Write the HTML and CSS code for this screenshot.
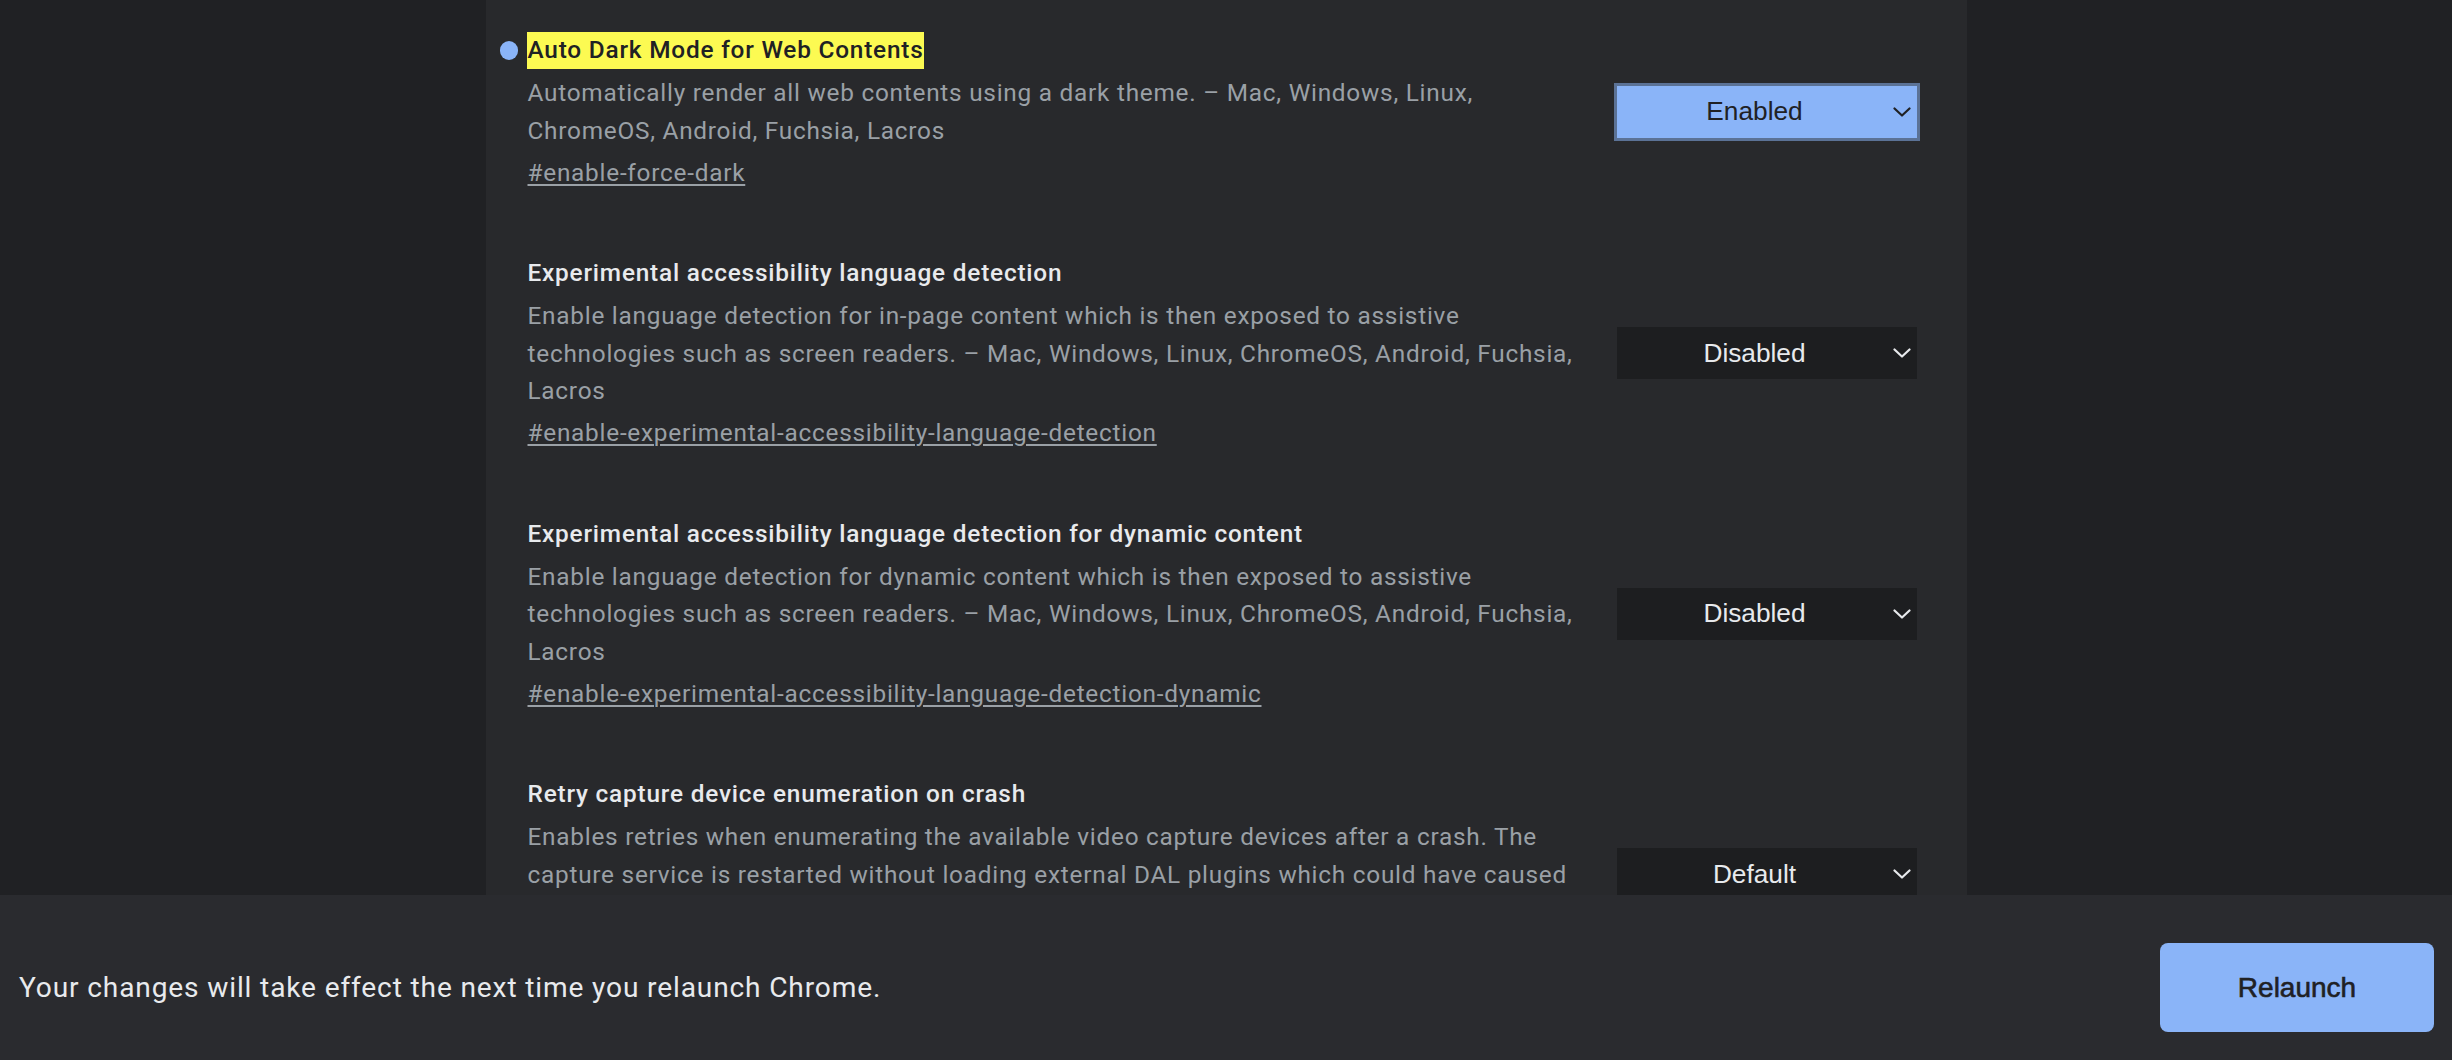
FILE: index.html
```html
<!DOCTYPE html>
<html lang="en">
<head>
<meta charset="utf-8">
<title>Experiments</title>
<link rel="stylesheet" href="styles.css">
</head>
<body>
<div class="page">
  <main class="scroller">
    <section class="column">
      <div class="exp">
        <span class="dot"></span>
        <div class="exp-text">
          <h3 class="exp-name"><span class="hl">Auto Dark Mode for Web Contents</span></h3>
          <p class="exp-desc">Automatically render all web contents using a dark theme. – Mac, Windows, Linux, ChromeOS, Android, Fuchsia, Lacros</p>
          <a class="exp-link" href="#enable-force-dark">#enable-force-dark</a>
        </div>
        <div class="exp-actions">
          <div class="select select-on"><span class="select-label">Enabled</span><svg class="chev" viewBox="0 0 18 10" width="18" height="10"><polyline points="1.5,1.5 9,8.5 16.5,1.5"/></svg></div>
        </div>
      </div>

      <div class="exp">
        <div class="exp-text">
          <h3 class="exp-name">Experimental accessibility language detection</h3>
          <p class="exp-desc">Enable language detection for in-page content which is then exposed to assistive technologies such as screen readers. – Mac, Windows, Linux, ChromeOS, Android, Fuchsia, Lacros</p>
          <a class="exp-link" href="#enable-experimental-accessibility-language-detection">#enable-experimental-accessibility-language-detection</a>
        </div>
        <div class="exp-actions">
          <div class="select"><span class="select-label">Disabled</span><svg class="chev" viewBox="0 0 18 10" width="18" height="10"><polyline points="1.5,1.5 9,8.5 16.5,1.5"/></svg></div>
        </div>
      </div>

      <div class="exp">
        <div class="exp-text">
          <h3 class="exp-name">Experimental accessibility language detection for dynamic content</h3>
          <p class="exp-desc">Enable language detection for dynamic content which is then exposed to assistive technologies such as screen readers. – Mac, Windows, Linux, ChromeOS, Android, Fuchsia, Lacros</p>
          <a class="exp-link" href="#enable-experimental-accessibility-language-detection-dynamic">#enable-experimental-accessibility-language-detection-dynamic</a>
        </div>
        <div class="exp-actions">
          <div class="select"><span class="select-label">Disabled</span><svg class="chev" viewBox="0 0 18 10" width="18" height="10"><polyline points="1.5,1.5 9,8.5 16.5,1.5"/></svg></div>
        </div>
      </div>

      <div class="exp">
        <div class="exp-text">
          <h3 class="exp-name">Retry capture device enumeration on crash</h3>
          <p class="exp-desc">Enables retries when enumerating the available video capture devices after a crash. The capture service is restarted without loading external DAL plugins which could have caused the crash. – Mac</p>
          <a class="exp-link" href="#retry-capture-device-enumeration-on-crash">#retry-capture-device-enumeration-on-crash</a>
        </div>
        <div class="exp-actions">
          <div class="select"><span class="select-label">Default</span><svg class="chev" viewBox="0 0 18 10" width="18" height="10"><polyline points="1.5,1.5 9,8.5 16.5,1.5"/></svg></div>
        </div>
      </div>
    </section>
  </main>
  <footer class="relaunch-bar">
    <p class="relaunch-text">Your changes will take effect the next time you relaunch Chrome.</p>
    <button class="relaunch-btn" type="button">Relaunch</button>
  </footer>
</div>
</body>
</html>
```

FILE: styles.css
```css
html, body {
  margin: 0;
  padding: 0;
  height: 100%;
}

body {
  background: #202124;
  font-family: Roboto, "Liberation Sans", Arial, sans-serif;
  color: #e8eaed;
}

.page {
  display: grid;
  grid-template-rows: 1fr 165px;
  height: 100vh;
  overflow: hidden;
}

.scroller {
  overflow: hidden;
  background: #202124;
  min-height: 0;
}

.column {
  width: 1481px;
  margin: 0 auto;
  min-height: 100%;
  background: #28292c;
}

.exp {
  position: relative;
  display: flex;
  align-items: center;
  padding: 32px 50px 32px 42px;
}

.dot {
  position: absolute;
  left: 14px;
  top: 41px;
  width: 18.5px;
  height: 18.5px;
  border-radius: 50%;
  background: #8ab4f8;
}

.exp-text {
  flex: 1 1 auto;
  min-width: 0;
}

.exp-name {
  margin: 0;
  font-size: 24.375px;
  line-height: 36.5px;
  font-weight: 500;
  letter-spacing: 0.8px;
  color: #e8eaed;
}

.hl {
  display: inline-block;
  background: #fcfa52;
  color: #202124;
  padding-left: 1px;
  margin-left: -1px;
}

.exp-desc {
  margin: 5.5px 0 0;
  font-size: 24.375px;
  line-height: 37.5px;
  letter-spacing: 0.75px;
  color: #9aa0a6;
}

.exp-link {
  display: inline-block;
  margin-top: 4.5px;
  font-size: 24.375px;
  line-height: 37.5px;
  letter-spacing: 0.75px;
  color: #9aa0a6;
  text-decoration: underline;
  text-underline-offset: 3px;
  text-decoration-thickness: 1.5px;
}

.exp-actions {
  flex: 0 0 auto;
  margin-left: 32px;
}

.select {
  display: flex;
  align-items: center;
  width: 300px;
  height: 52px;
  box-sizing: border-box;
  background: #1d1e20;
  color: #e8eaed;
  font-family: "Liberation Sans", Arial, sans-serif;
  font-size: 26.25px;
}

.select-label {
  flex: 1 1 auto;
  text-align: center;
}

.chev {
  flex: 0 0 auto;
  margin-right: 6px;
  fill: none;
  stroke: #e8eaed;
  stroke-width: 2.2;
  stroke-linecap: round;
  stroke-linejoin: round;
}

.select-on {
  background: #8ab4f8;
  color: #202124;
  outline: 3.5px solid #5b7296;
}

.select-on .chev {
  stroke: #202124;
}

.relaunch-bar {
  display: flex;
  align-items: center;
  justify-content: space-between;
  padding: 48px 18px 28px 19px;
  background: #2a2b2f;
  box-sizing: border-box;
}

.relaunch-text {
  margin: 0;
  font-size: 28.125px;
  letter-spacing: 0.85px;
  color: #e8eaed;
}

.relaunch-btn {
  width: 274px;
  height: 89px;
  border: none;
  border-radius: 8px;
  background: #8ab4f8;
  color: #202124;
  font-family: "Liberation Sans", Arial, sans-serif;
  font-size: 28px;
  font-weight: 400;
  -webkit-text-stroke: 0.6px #202124;
  padding: 0;
}
```
